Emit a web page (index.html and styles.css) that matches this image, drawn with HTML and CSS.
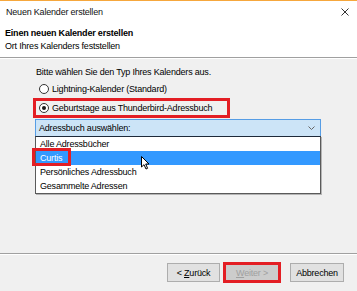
FILE: index.html
```html
<!DOCTYPE html>
<html lang="de">
<head>
<meta charset="utf-8">
<link rel="stylesheet" href="styles.css">
</head>
<body>
<div class="window">
  <div class="titlebar">
    <span class="title">Neuen Kalender erstellen</span>
    <svg class="close" width="8" height="8" viewBox="0 0 8 8"><path d="M0.5 0.5 L7.5 7.5 M7.5 0.5 L0.5 7.5" stroke="#333" stroke-width="1"/></svg>
  </div>
  <div class="header">
    <div class="h-title">Einen neuen Kalender erstellen</div>
    <div class="h-sub">Ort Ihres Kalenders feststellen</div>
  </div>
  <div class="body">
    <div class="prompt">Bitte wählen Sie den Typ Ihres Kalenders aus.</div>
    <div class="radio-row first"><span class="radio"></span><span>Lightning-Kalender (Standard)</span></div>
    <div class="radio-row hl"><span class="radio checked"></span><span>Geburtstage aus Thunderbird-Adressbuch</span></div>
    <div class="combo">
      <div class="combo-head">
        <span>Adressbuch auswählen:</span>
        <svg class="chev" width="7" height="4" viewBox="0 0 7 4"><path d="M0.5 0.5 L3.5 3.5 L6.5 0.5" fill="none" stroke="#666" stroke-width="1"/></svg>
      </div>
      <div class="list">
        <div class="item">Alle Adressbücher</div>
        <div class="item active">Curtis<span class="mark"></span>
          <svg class="cursor" width="10" height="14" viewBox="0 0 10 14"><path d="M0.5 0.5 L0.5 11 L3 8.7 L5 13 L6.6 12.3 L4.7 8 L8 8 Z" fill="#fff" stroke="#000" stroke-width="1" stroke-linejoin="round"/></svg>
        </div>
        <div class="item">Persönliches Adressbuch</div>
        <div class="item">Gesammelte Adressen</div>
      </div>
    </div>
  </div>
  <div class="footer">
    <button class="btn back">&lt; <u>Z</u>urück</button>
    <button class="btn next"><u>W</u>eiter &gt;</button>
    <button class="btn cancel">Abbrechen</button>
  </div>
</div>
</body>
</html>
```
FILE: styles.css
```css
* { box-sizing: border-box; }
html, body { margin: 0; padding: 0; }
body {
  width: 357px;
  height: 291px;
  overflow: hidden;
  background: #f0f0f0;
  font-family: "Liberation Sans", Arial, sans-serif;
  font-size: 9px;
  letter-spacing: -0.2px;
  color: #000;
}
.window { width: 357px; height: 291px; display: flex; flex-direction: column; }
.titlebar {
  height: 21px;
  flex: none;
  background: #fff;
  border-top: 1px solid #f6a73c;
  display: flex;
  align-items: center;
  justify-content: space-between;
  padding: 1px 8px 0 6px;
}
.title { color: #111; }
.header {
  flex: none;
  background: #fff;
  height: 37px;
  padding: 6px 0 0 5px;
  border-bottom: 1px solid #a0a0a0;
}
.h-title { font-weight: bold; line-height: 13px; }
.h-sub { line-height: 13px; }
.body {
  flex: 1;
  border-top: 1px solid #fff;
  padding: 6px 0 0 33px;
}
.prompt { line-height: 14px; margin-left: 3px; }
.radio-row {
  display: flex;
  align-items: center;
  gap: 3px;
  padding-left: 6px;
}
.radio-row.first { height: 18px; margin-top: 1px; }
.radio {
  width: 10px; height: 10px;
  border: 1px solid #333;
  border-radius: 50%;
  background: #fff;
  position: relative;
  flex: none;
}
.radio.checked::after {
  content: "";
  position: absolute;
  left: 2px; top: 2px;
  width: 4px; height: 4px;
  border-radius: 50%;
  background: #1a1a1a;
}
.hl {
  border: 3px solid #e31e24;
  height: 20px;
  width: 197px;
  padding-left: 3px;
}
.combo { margin: 1px 0 0 2px; width: 286px; }
.combo-head {
  height: 17px;
  background: #cce4f7;
  border: 1px solid #569de5;
  border-bottom: none;
  display: flex;
  align-items: center;
  justify-content: space-between;
  padding: 0 5px 0 3px;
}
.list {
  background: #fff;
  border: 1px solid #5a5a5a;
  border-top: 1px solid #1e2a3a;
  box-shadow: 1px 1px 0 #b5b5b5;
  height: 58px;
}
.item { height: 14px; line-height: 14px; padding-left: 4px; position: relative; }
.item.active { background: #3399ff; color: #fff; }
.mark {
  position: absolute;
  left: -4px; top: -3px;
  width: 39px; height: 18px;
  border: 3px solid #e31e24;
}
.cursor { position: absolute; left: 105px; top: 5px; }
.footer {
  flex: none;
  height: 38px;
  border-top: 1px solid #a0a0a0;
  box-shadow: inset 0 1px 0 #fff;
  display: flex;
  justify-content: flex-end;
  align-items: flex-start;
  padding: 9px 13px 0 0;
}
.btn {
  font-family: inherit;
  font-size: 9px;
  letter-spacing: -0.2px;
  height: 19px;
  background: #e1e1e1;
  border: 1px solid #adadad;
  padding: 0;
  color: #000;
}
.back { width: 53px; }
.next {
  width: 56px;
  margin-left: 4px;
  color: #a0a0a0;
  background: #cccccc;
  border-color: #bfbfbf;
  outline: 3px solid #e31e24;
  outline-offset: -2px;
}
.cancel { width: 54px; margin-left: 10px; }
```
